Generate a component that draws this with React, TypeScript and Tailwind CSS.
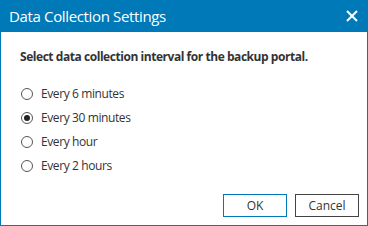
import { useState } from "react";

const options = ["Every 6 minutes", "Every 30 minutes", "Every hour", "Every 2 hours"];

function Radio({ checked }: { checked: boolean }) {
  return (
    <span className="flex h-[12px] w-[12px] items-center justify-center rounded-full border border-[#555] bg-white">
      {checked && <span className="h-[6px] w-[6px] rounded-full bg-[#222]" />}
    </span>
  );
}

export default function App() {
  const [value, setValue] = useState(1);

  return (
    <div
      className="flex h-[226px] w-[368px] flex-col bg-white text-[#333]"
      style={{ fontFamily: '"Open Sans", "Noto Sans", sans-serif' }}
    >
      <div className="flex h-[32px] shrink-0 items-center justify-between bg-[#0079b9] pl-[9px] pr-[9px] text-white">
        <span className="text-[15px] leading-none tracking-[-0.35px]">Data Collection Settings</span>
        <svg width="12" height="12" viewBox="0 0 12 12" className="mr-[1px]">
          <path d="M1 1 L11 11 M11 1 L1 11" stroke="white" strokeWidth="2" />
        </svg>
      </div>
      <div className="flex flex-1 flex-col border-x border-b border-[#0079b9] pl-[19px] pr-[8px]">
        <div className="mt-[16px] text-[12px] font-bold leading-[18px] tracking-[-0.45px]">
          Select data collection interval for the backup portal.
        </div>
        <div className="mt-[16px] flex flex-col">
          {options.map((o, i) => (
            <label
              key={o}
              className="flex h-[24px] cursor-default items-center gap-[8px] text-[12px] tracking-[-0.4px]"
              onClick={() => setValue(i)}
            >
              <span className="ml-[1px]">
                <Radio checked={value === i} />
              </span>
              <span>{o}</span>
            </label>
          ))}
        </div>
        <div className="mt-auto mb-[8px] flex justify-end gap-[8px]">
          <button className="h-[23px] w-[64px] border border-[#0079b9] bg-white text-[12px] text-[#333]">
            OK
          </button>
          <button className="h-[23px] w-[64px] border border-[#444] bg-white text-[12px] text-[#333]">
            Cancel
          </button>
        </div>
      </div>
    </div>
  );
}
